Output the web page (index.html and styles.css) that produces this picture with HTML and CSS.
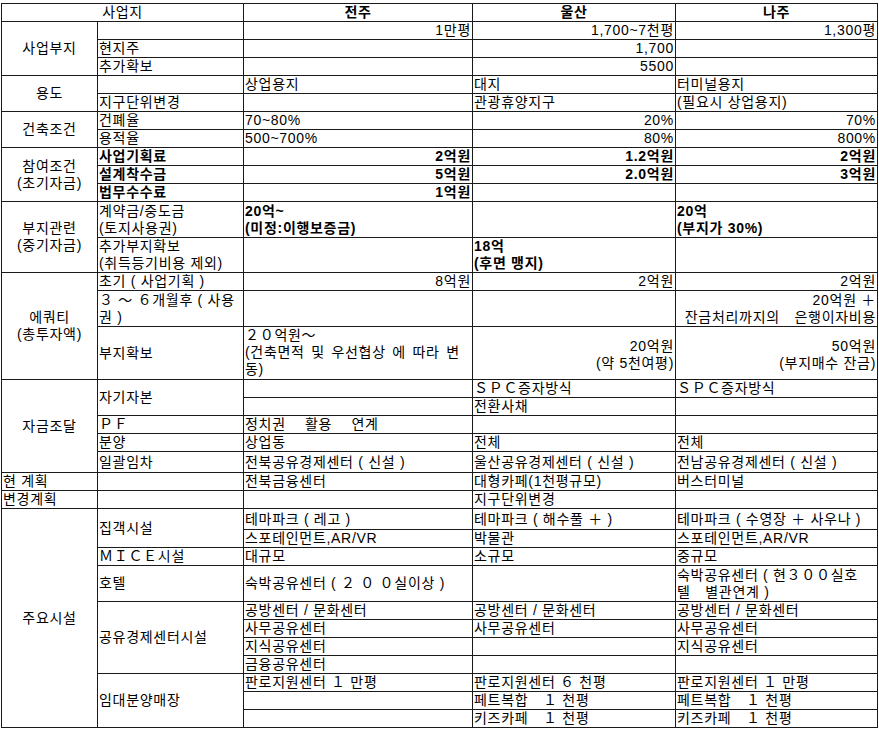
FILE: index.html
```html
<!DOCTYPE html>
<html lang="ko">
<head>
<meta charset="utf-8">
<title>사업지 비교</title>
<link rel="stylesheet" href="styles.css">
</head>
<body>
<table class="sheet">
<colgroup><col class="ca"><col class="cb"><col class="cc"><col class="cd"><col class="ce"></colgroup>
<tbody>
<tr><td colspan="2" class="c">사업지</td><td class="c b">전주</td><td class="c b">울산</td><td class="c b">나주</td></tr>

<tr><td rowspan="3" class="c">사업부지</td><td></td><td class="r">1만평</td><td class="r">1,700~7천평</td><td class="r">1,300평</td></tr>
<tr><td>현지주</td><td></td><td class="r">1,700</td><td></td></tr>
<tr><td>추가확보</td><td></td><td class="r">5500</td><td></td></tr>

<tr><td rowspan="2" class="c">용도</td><td></td><td>상업용지</td><td>대지</td><td>터미널용지</td></tr>
<tr><td>지구단위변경</td><td></td><td>관광휴양지구</td><td>(필요시 상업용지)</td></tr>

<tr><td rowspan="2" class="c">건축조건</td><td>건폐율</td><td>70~80%</td><td class="r">20%</td><td class="r">70%</td></tr>
<tr><td>용적율</td><td>500~700%</td><td class="r">80%</td><td class="r">800%</td></tr>

<tr><td rowspan="3" class="c"><span class="ln">참여조건</span><span class="ln">(초기자금)</span></td><td class="b">사업기획료</td><td class="r b">2억원</td><td class="r b">1.2억원</td><td class="r b">2억원</td></tr>
<tr><td class="b">설계착수금</td><td class="r b">5억원</td><td class="r b">2.0억원</td><td class="r b">3억원</td></tr>
<tr><td class="b">법무수수료</td><td class="r b">1억원</td><td></td><td></td></tr>

<tr class="l2"><td rowspan="2" class="c"><span class="ln">부지관련</span><span class="ln">(중기자금)</span></td><td><span class="ln">계약금/중도금</span><span class="ln">(토지사용권)</span></td><td class="b"><span class="ln">20억~</span><span class="ln">(미정:이행보증금)</span></td><td></td><td class="b"><span class="ln">20억</span><span class="ln">(부지가 30%)</span></td></tr>
<tr class="l2s"><td><span class="ln">추가부지확보</span><span class="ln">(취득등기비용 제외)</span></td><td></td><td class="b"><span class="ln">18억</span><span class="ln">(후면 맹지)</span></td><td></td></tr>

<tr><td rowspan="3" class="c"><span class="ln">에쿼티</span><span class="ln">(총투자액)</span></td><td>초기 ( 사업기획 )</td><td class="r">8억원</td><td class="r">2억원</td><td class="r">2억원</td></tr>
<tr class="l2"><td><span class="ln">３ ～ ６개월후 ( 사용</span><span class="ln">권 )</span></td><td></td><td></td><td class="r"><span class="ln">20억원 ＋</span><span class="ln">잔금처리까지의　은행이자비용</span></td></tr>
<tr class="l3"><td>부지확보</td><td class="top wide"><span class="ln">２０억원～</span><span class="ln">(건축면적 및 우선협상 에 따라 변</span><span class="ln">동)</span></td><td class="r low"><span class="ln">20억원</span><span class="ln">(약 5천여평)</span></td><td class="r low"><span class="ln">50억원</span><span class="ln">(부지매수 잔금)</span></td></tr>

<tr><td rowspan="5" class="c">자금조달</td><td rowspan="2">자기자본</td><td></td><td>ＳＰＣ증자방식</td><td>ＳＰＣ증자방식</td></tr>
<tr><td></td><td>전환사채</td><td></td></tr>
<tr><td>ＰＦ</td><td>정치권　 활용　 연계</td><td></td><td></td></tr>
<tr><td>분양</td><td>상업동</td><td>전체</td><td>전체</td></tr>
<tr class="tall"><td>일괄임차</td><td>전북공유경제센터 ( 신설 )</td><td>울산공유경제센터 ( 신설 )</td><td>전남공유경제센터 ( 신설 )</td></tr>

<tr><td>현 계획</td><td></td><td>전북금융센터</td><td>대형카페(1천평규모)</td><td>버스터미널</td></tr>
<tr><td>변경계획</td><td></td><td></td><td>지구단위변경</td><td></td></tr>

<tr class="tall"><td rowspan="11" class="c">주요시설</td><td rowspan="2">집객시설</td><td>테마파크 ( 레고 )</td><td>테마파크 ( 해수풀 ＋ )</td><td>테마파크 ( 수영장 ＋ 사우나 )</td></tr>
<tr><td>스포테인먼트,AR/VR</td><td>박물관</td><td>스포테인먼트,AR/VR</td></tr>
<tr><td>ＭＩＣＥ시설</td><td>대규모</td><td>소규모</td><td>중규모</td></tr>
<tr class="l2"><td>호텔</td><td>숙박공유센터 ( ２ ０ ０실이상 )</td><td></td><td><span class="ln">숙박공유센터 ( 현３００실호</span><span class="ln">텔　별관연계 )</span></td></tr>
<tr><td rowspan="4">공유경제센터시설</td><td>공방센터 / 문화센터</td><td>공방센터 / 문화센터</td><td>공방센터 / 문화센터</td></tr>
<tr><td>사무공유센터</td><td>사무공유센터</td><td>사무공유센터</td></tr>
<tr><td>지식공유센터</td><td></td><td>지식공유센터</td></tr>
<tr><td>금융공유센터</td><td></td><td></td></tr>
<tr><td rowspan="3">임대분양매장</td><td>판로지원센터 １ 만평</td><td>판로지원센터 ６ 천평</td><td>판로지원센터 １ 만평</td></tr>
<tr><td></td><td>페트복합　１ 천평</td><td>페트복합　１ 천평</td></tr>
<tr><td></td><td>키즈카페　１ 천평</td><td>키즈카페　１ 천평</td></tr>
</tbody>
</table>
</body>
</html>
```

FILE: styles.css
```css
body {
  margin: 0;
  background: #fff;
  color: #000;
  font-family: "Liberation Sans", "Noto Sans CJK KR", sans-serif;
  font-size: 14px;
}

.sheet {
  border-collapse: collapse;
  table-layout: fixed;
  width: 876px;
  margin: 3px 0 0 1px;
  letter-spacing: 0.7px;
}

.ca { width: 96px; }
.cb { width: 146px; }
.cc { width: 229px; }
.cd { width: 203px; }
.ce { width: 202px; }

.sheet td {
  border: 1px solid #1a1a1a;
  padding: 0 1px;
  height: 17px;
  line-height: 17px;
  white-space: nowrap;
  overflow: hidden;
  vertical-align: middle;
  text-align: left;
}

.ln {
  display: block;
  height: 17px;
}

.sheet tr.tall td { height: 20px; }
.sheet tr.l2 td { height: 35px; }
.sheet tr.l2s td { height: 34px; }
.sheet tr.l3 td { height: 52px; }

.sheet td.c { text-align: center; }
.sheet td.r { text-align: right; }
.sheet td.b { font-weight: bold; }
.sheet td.top { vertical-align: top; }
.sheet td.wide { word-spacing: 2px; }
.sheet tr.l3 td.low {
  vertical-align: bottom;
  height: 45px;
  padding-bottom: 7px;
}
```
